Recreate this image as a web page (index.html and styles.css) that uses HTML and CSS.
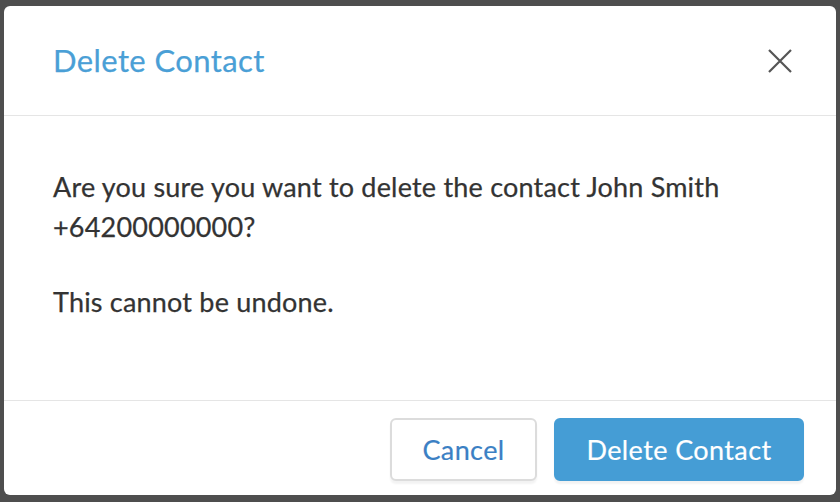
FILE: index.html
```html
<!DOCTYPE html>
<html>
<head>
<meta charset="utf-8">
<link rel="stylesheet" href="styles.css">
</head>
<body>
<div class="modal">
  <div class="modal-header">
    <h2 class="modal-title">Delete Contact</h2>
    <button class="close" aria-label="Close">
      <svg width="24" height="24" viewBox="0 0 24 24"><path d="M1 1 L23 23 M23 1 L1 23" stroke="#555" stroke-width="2.2" fill="none"/></svg>
    </button>
  </div>
  <div class="modal-body">
    <p>Are you sure you want to delete the contact John Smith +64200000000?</p>
    <p>This cannot be undone.</p>
  </div>
  <div class="modal-footer">
    <button class="btn btn-default">Cancel</button>
    <button class="btn btn-primary">Delete Contact</button>
  </div>
</div>
</body>
</html>
```
FILE: styles.css
```css
html, body {
  margin: 0;
  padding: 0;
  background: #4e4e4e;
  width: 840px;
  height: 502px;
  overflow: hidden;
  font-family: Lato, "Open Sans", sans-serif;
}
body {
  padding: 6px 4px 0 4px;
  box-sizing: border-box;
}
.modal {
  width: 832px;
  height: 489px;
  background: #fff;
  border-radius: 6px;
  display: flex;
  flex-direction: column;
}
.modal-header {
  display: flex;
  align-items: center;
  justify-content: space-between;
  padding: 38px 44px 38px 49px;
  border-bottom: 1px solid #e5e5e5;
}
.modal-title {
  margin: 0;
  font-size: 31px;
  line-height: 33px;
  letter-spacing: 0.4px;
  font-weight: 400;
  color: #4a9fd6;
  -webkit-text-stroke: 0.25px currentColor;
}
.close {
  border: 0;
  background: none;
  padding: 0;
  width: 24px;
  height: 24px;
  display: flex;
  cursor: pointer;
}
.modal-body {
  flex: 1;
  padding: 51px 49px 0 49px;
  color: #333;
  font-size: 27px;
  letter-spacing: 0.2px;
  line-height: 40px;
  -webkit-text-stroke: 0.25px currentColor;
}
.modal-body p {
  margin: 0 0 35px 0;
  max-width: 700px;
}
.modal-footer {
  border-top: 1px solid #e5e5e5;
  display: flex;
  justify-content: flex-end;
  gap: 17px;
  padding: 17px 32px 14px 0;
}
.btn {
  height: 63px;
  border-radius: 6px;
  font-family: Lato, "Open Sans", sans-serif;
  font-size: 27px;
  letter-spacing: 0.4px;
  padding: 0;
  box-shadow: 0 3px 2px rgba(0,0,0,0.05);
  cursor: pointer;
  -webkit-text-stroke: 0.2px currentColor;
}
.btn-default {
  background: #fff;
  border: 2px solid #dcdcdc;
  color: #3b80c4;
  width: 147px;
}
.btn-primary {
  background: #459dd5;
  border: 2px solid #459dd5;
  color: #fff;
  width: 250px;
}
```
